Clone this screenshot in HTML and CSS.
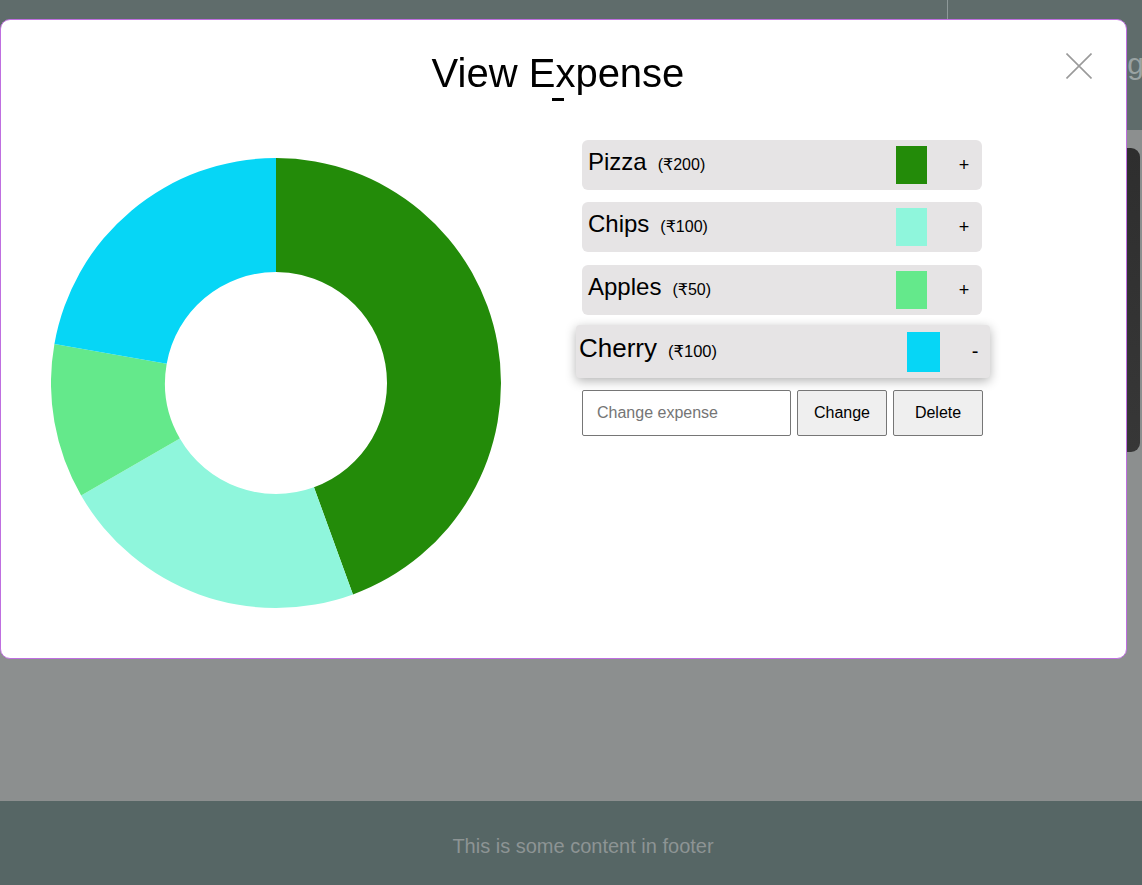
FILE: index.html
```html
<!DOCTYPE html>
<html lang="en">
<head>
<meta charset="utf-8">
<title>View Expense</title>
<link rel="stylesheet" href="styles.css">
</head>
<body>
<div class="page">
  <header class="topbar">
    <div class="brand"></div>
    <nav class="nav"><span class="nav-link">Login</span></nav>
  </header>
  <main class="content">
    <div class="side-card"></div>
  </main>
  <footer class="footer">This is some content in footer</footer>
</div>

<div class="modal">
  <div class="modal-head">
    <h2 class="modal-title">View Expense</h2>
    <div class="title-bar"></div>
    <button class="close-btn" aria-label="Close">
      <svg width="26" height="26" viewBox="0 0 26 26"><path d="M0.5 0.5 L25.5 25.5 M25.5 0.5 L0.5 25.5" stroke="#9a9a9a" stroke-width="1.6" fill="none"/></svg>
    </button>
  </div>
  <div class="modal-body">
    <div class="chart">
      <svg width="450" height="450" viewBox="0 0 450 450">
        <path fill="#238b09" d="M225,0 A225,225 0 0 1 301.95,436.43 L262.96,329.31 A111,111 0 0 0 225,114 Z"/>
        <path fill="#8ff6dc" d="M301.95,436.43 A225,225 0 0 1 30.14,337.5 L128.87,280.5 A111,111 0 0 0 262.96,329.31 Z"/>
        <path fill="#64e98b" d="M30.14,337.5 A225,225 0 0 1 3.42,185.93 L115.69,205.72 A111,111 0 0 0 128.87,280.5 Z"/>
        <path fill="#06d6f6" d="M3.42,185.93 A225,225 0 0 1 225,0 L225,114 A111,111 0 0 0 115.69,205.72 Z"/>
      </svg>
    </div>
    <div class="panel">
      <ul class="expense-list">
        <li class="expense">
          <span class="label"><span class="name">Pizza</span><span class="price">(₹200)</span></span>
          <span class="swatch swatch-pizza"></span>
          <span class="toggle">+</span>
        </li>
        <li class="expense">
          <span class="label"><span class="name">Chips</span><span class="price">(₹100)</span></span>
          <span class="swatch swatch-chips"></span>
          <span class="toggle">+</span>
        </li>
        <li class="expense expense-third">
          <span class="label"><span class="name">Apples</span><span class="price">(₹50)</span></span>
          <span class="swatch swatch-apples"></span>
          <span class="toggle">+</span>
        </li>
        <li class="expense expense-active">
          <span class="label"><span class="name">Cherry</span><span class="price">(₹100)</span></span>
          <span class="swatch swatch-cherry"></span>
          <span class="toggle">-</span>
        </li>
      </ul>
      <div class="edit-row">
        <input class="edit-input" type="text" placeholder="Change expense">
        <button class="edit-btn">Change</button>
        <button class="edit-btn">Delete</button>
      </div>
    </div>
  </div>
</div>
</body>
</html>
```

FILE: styles.css
```css
html, body {
  margin: 0;
  padding: 0;
}
body {
  width: 1142px;
  height: 885px;
  overflow: hidden;
  font-family: "Liberation Sans", Arial, "DejaVu Sans", sans-serif;
  color: #000;
}
.page {
  display: flex;
  flex-direction: column;
  height: 885px;
}
.topbar {
  height: 130px;
  background: #5f6c6b;
  display: flex;
  flex-shrink: 0;
}
.brand {
  width: 947px;
}
.nav {
  flex: 1;
  border-left: 1px solid #8e9999;
  padding-left: 146px;
  padding-top: 47px;
  white-space: nowrap;
  overflow: hidden;
}
.nav-link {
  font-size: 30px;
  color: #9aa3a3;
}
.content {
  flex: 1;
  background: #8c8f8f;
  display: flex;
  justify-content: flex-end;
  align-items: flex-start;
}
.side-card {
  width: 300px;
  height: 304px;
  margin-top: 18px;
  margin-right: 2px;
  border-radius: 9px;
  background: linear-gradient(#2e2e2e, #373737);
}
.footer {
  height: 84px;
  box-sizing: border-box;
  flex-shrink: 0;
  background: #566665;
  color: #8d9494;
  font-size: 20px;
  display: flex;
  align-items: center;
  justify-content: center;
  padding-left: 24px;
  padding-top: 6px;
}

/* modal */
.modal {
  position: fixed;
  left: 0;
  top: 19px;
  width: 1127px;
  height: 640px;
  box-sizing: border-box;
  background: #fff;
  border: 1px solid #bf6fe0;
  border-radius: 10px;
}
.modal-head {
  position: relative;
  padding-top: 30px;
  padding-right: 11px;
}
.modal-title {
  margin: 0;
  font-size: 40px;
  font-weight: normal;
  line-height: 46px;
  text-align: center;
}
.title-bar {
  width: 12px;
  height: 3px;
  background: #000;
  margin: 2px auto 0;
}
.close-btn {
  position: absolute;
  top: 33px;
  right: 34px;
  width: 26px;
  height: 26px;
  padding: 0;
  border: 0;
  background: transparent;
  display: block;
}
.close-btn svg {
  display: block;
}
.modal-body {
  display: flex;
  align-items: flex-start;
  margin-top: 39px;
}
.chart {
  margin-left: 50px;
  margin-top: 18px;
  width: 450px;
  height: 450px;
}
.chart svg {
  display: block;
}
.panel {
  margin-left: 81px;
  width: 401px;
}
.expense-list {
  list-style: none;
  margin: 0;
  padding: 0;
}
.expense {
  width: 400px;
  height: 50px;
  box-sizing: border-box;
  background: #e6e4e5;
  border-radius: 6px;
  display: flex;
  align-items: center;
  padding-left: 6px;
  margin-bottom: 12px;
}
.expense-third {
  margin-top: 13px;
}
.label {
  display: flex;
  align-items: baseline;
  margin-bottom: 6px;
}
.name {
  font-size: 24px;
}
.price {
  font-size: 16px;
  margin-left: 11px;
}
.swatch {
  margin-left: auto;
  width: 31px;
  height: 38px;
}
.swatch-pizza { background: #238b09; }
.swatch-chips { background: #8ff6dc; }
.swatch-apples { background: #64e98b; }
.swatch-cherry { background: #06d6f6; }
.toggle {
  width: 36px;
  margin-left: 19px;
  text-align: center;
  font-size: 18px;
}
.expense-active {
  width: 414px;
  height: 53px;
  margin-left: -6px;
  margin-top: -2px;
  padding-left: 3px;
  border-radius: 4px;
  box-shadow: 0 3px 11px rgba(0, 0, 0, 0.3);
}
.expense-active .name {
  font-size: 26px;
}
.expense-active .price {
  font-size: 16.5px;
  margin-left: 11px;
}
.expense-active .swatch {
  width: 33px;
  height: 40px;
}
.expense-active .toggle {
  width: 30px;
  margin-left: 20px;
  font-size: 20px;
}
.edit-row {
  display: flex;
  gap: 6px;
}
.edit-input {
  width: 209px;
  height: 46px;
  box-sizing: border-box;
  border: 1px solid #767676;
  border-radius: 2px;
  padding: 0 14px;
  font-family: inherit;
  font-size: 16px;
  margin: 0;
}
.edit-input::placeholder {
  color: #757575;
}
.edit-btn {
  width: 90px;
  height: 46px;
  box-sizing: border-box;
  background: #efefef;
  border: 1px solid #767676;
  border-radius: 2px;
  font-family: inherit;
  font-size: 16px;
  color: #000;
  margin: 0;
  padding: 0;
}
```
